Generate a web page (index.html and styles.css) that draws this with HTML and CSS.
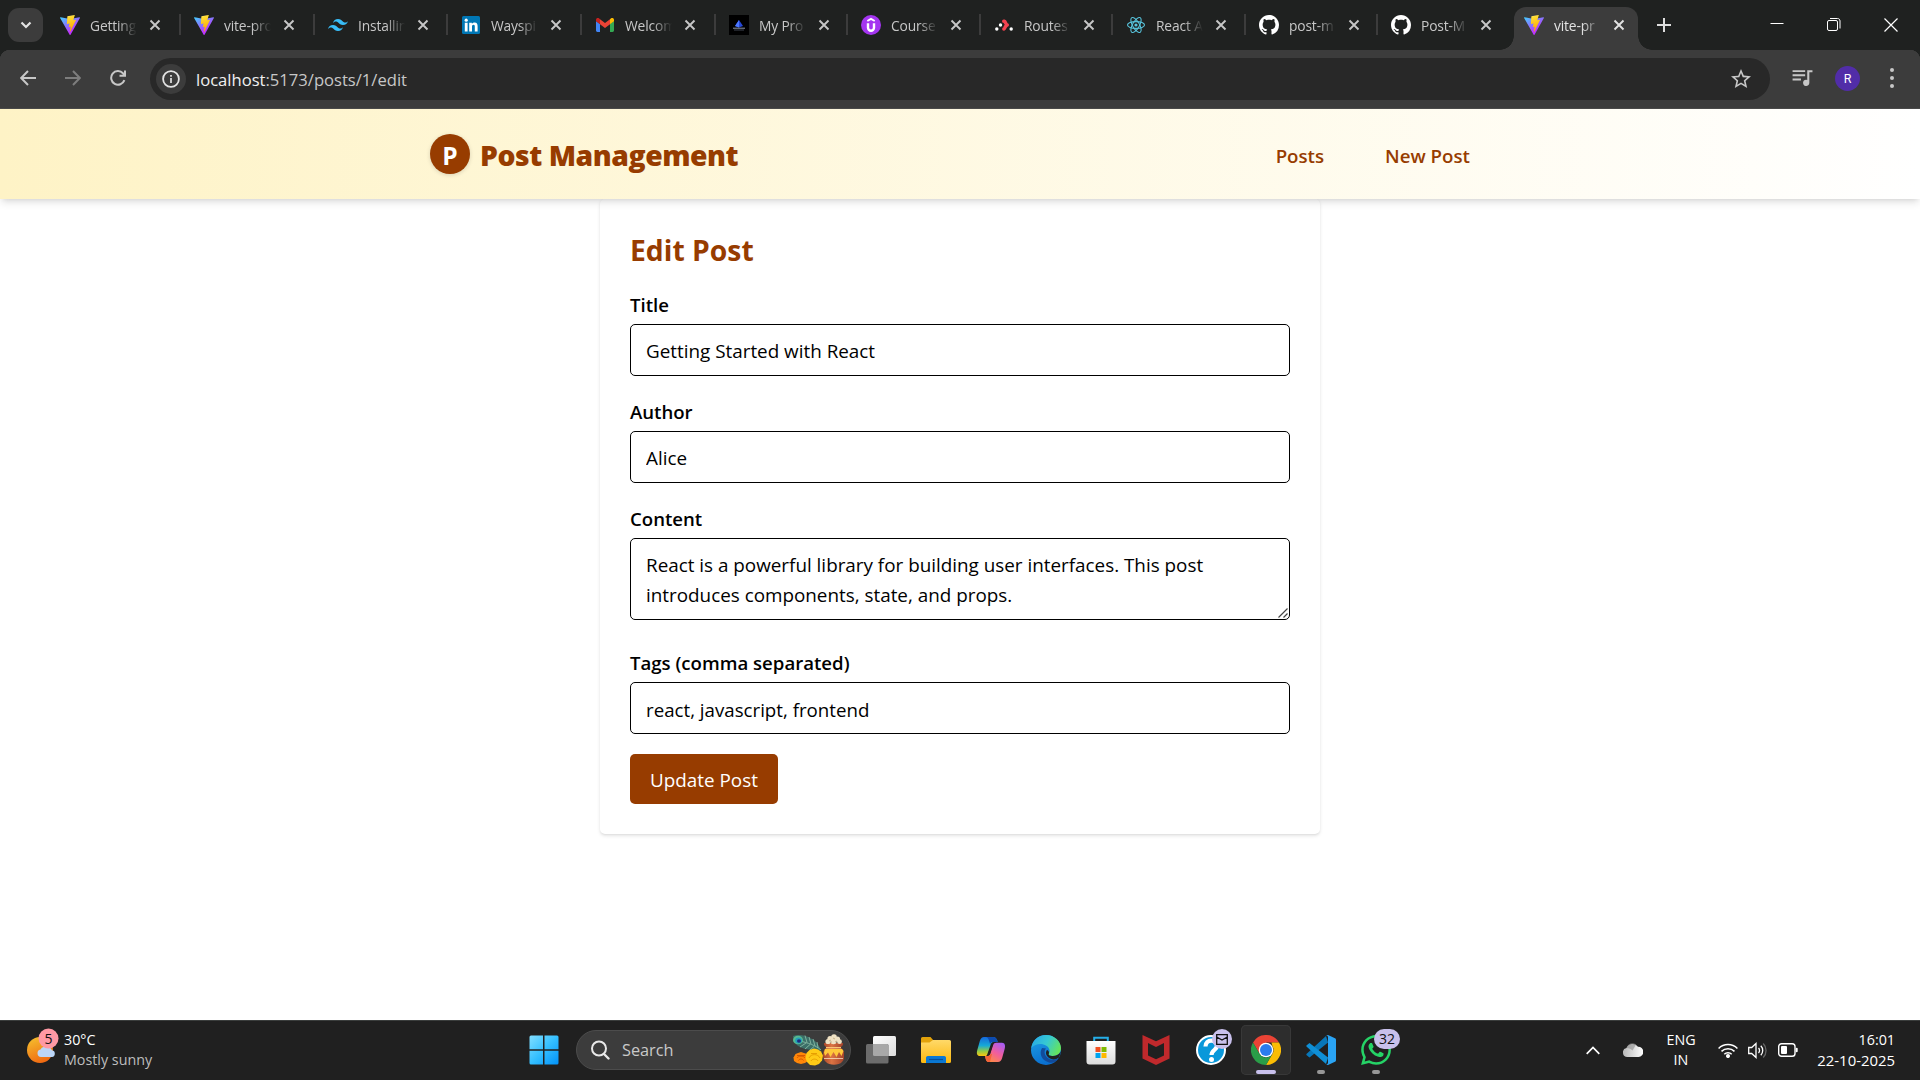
FILE: index.html
```html
<!DOCTYPE html>
<html lang="en">
<head>
<meta charset="utf-8">
<title>vite-project</title>
<link rel="stylesheet" href="styles.css">
</head>
<body>
<svg class="defs" width="0" height="0" aria-hidden="true">
  <defs>
    <linearGradient id="va" x1="0" x2=".55" y1="0" y2=".8"><stop offset="0" stop-color="#41d1ff"/><stop offset="1" stop-color="#bd34fe"/></linearGradient>
    <linearGradient id="vb" x1=".4" x2=".55" y1="0" y2=".9"><stop offset="0" stop-color="#ffea83"/><stop offset=".1" stop-color="#ffdd35"/><stop offset="1" stop-color="#ffa800"/></linearGradient>
    <linearGradient id="win" gradientUnits="userSpaceOnUse" x1="0" x2="30" y1="0" y2="30"><stop offset="0" stop-color="#85e0ff"/><stop offset=".5" stop-color="#34bfff"/><stop offset="1" stop-color="#0090f8"/></linearGradient>
    <linearGradient id="sun" x1=".3" x2=".7" y1="0" y2="1"><stop offset="0" stop-color="#f5bb2c"/><stop offset="1" stop-color="#ef6410"/></linearGradient>
    <linearGradient id="fold" x1="0" x2="0" y1="0" y2="1"><stop offset="0" stop-color="#ffd969"/><stop offset="1" stop-color="#fcb80e"/></linearGradient>
    <linearGradient id="cpa" x1="0" x2="0" y1="0" y2="1"><stop offset="0" stop-color="#1568dd"/><stop offset=".45" stop-color="#16a9d8"/><stop offset=".75" stop-color="#94cb45"/><stop offset="1" stop-color="#ffc50e"/></linearGradient>
    <linearGradient id="cpb" x1=".8" x2=".2" y1="0" y2="1"><stop offset="0" stop-color="#a75cf5"/><stop offset=".5" stop-color="#f15e9c"/><stop offset="1" stop-color="#ff8d3e"/></linearGradient>
    <linearGradient id="ega" x1="0" x2="1" y1=".2" y2=".6"><stop offset="0" stop-color="#27a8e8"/><stop offset=".5" stop-color="#36c9d2"/><stop offset="1" stop-color="#66e45a"/></linearGradient>
    <linearGradient id="egb" x1="0" x2=".4" y1="0" y2="1"><stop offset="0" stop-color="#1fa3e5"/><stop offset="1" stop-color="#0a6fd0"/></linearGradient>
    <linearGradient id="bag" x1="0" x2="0" y1="0" y2="1"><stop offset="0" stop-color="#fff"/><stop offset="1" stop-color="#dcdcdc"/></linearGradient>
    <linearGradient id="cl" x1="0" x2="1" y1="0" y2="0"><stop offset="0" stop-color="#b9b9b9"/><stop offset="1" stop-color="#fff"/></linearGradient>
    <linearGradient id="pot" x1="0" x2="1" y1="0" y2="0"><stop offset="0" stop-color="#a9472a"/><stop offset=".4" stop-color="#dc7443"/><stop offset="1" stop-color="#a3412a"/></linearGradient>
    <symbol id="i-vite" viewBox="0 0 256 257">
      <path fill="url(#va)" d="M255.153 37.938L134.897 252.976c-2.483 4.44-8.862 4.466-11.382.048L.875 37.958c-2.746-4.814 1.371-10.646 6.827-9.67l120.385 21.517a6.537 6.537 0 0 0 2.322-.004l117.867-21.483c5.438-.991 9.574 4.796 6.877 9.62Z"/>
      <path fill="url(#vb)" d="M185.432.063L96.44 17.501a3.268 3.268 0 0 0-2.634 3.014l-5.474 92.456a3.268 3.268 0 0 0 3.997 3.378l24.777-5.718c2.318-.535 4.413 1.507 3.936 3.838l-7.361 36.047c-.495 2.426 1.782 4.5 4.151 3.78l15.304-4.649c2.372-.72 4.652 1.36 4.15 3.788l-11.698 56.621c-.732 3.542 3.979 5.473 5.943 2.437l1.313-2.028l72.516-144.72c1.215-2.423-.88-5.186-3.54-4.672l-25.505 4.922c-2.396.462-4.435-1.77-3.759-4.114l16.646-57.705c.677-2.35-1.37-4.583-3.769-4.113Z"/>
    </symbol>
    <symbol id="i-tailwind" viewBox="2 2 20 20"><path fill="#38bdf8" d="M12 6C9.33 6 7.67 7.33 7 10c1-1.33 2.17-1.83 3.5-1.5.76.19 1.31.74 1.91 1.35.98 1 2.12 2.15 4.59 2.15 2.67 0 4.33-1.33 5-4-1 1.33-2.17 1.83-3.5 1.5-.76-.19-1.3-.74-1.91-1.35C15.61 7.15 14.47 6 12 6m-5 6c-2.67 0-4.33 1.33-5 4 1-1.33 2.17-1.83 3.5-1.5.76.19 1.3.74 1.91 1.35C8.39 16.85 9.53 18 12 18c2.67 0 4.33-1.33 5-4-1 1.33-2.17 1.83-3.5 1.5-.76-.19-1.3-.74-1.91-1.35C10.61 13.15 9.47 12 7 12z"/></symbol>
    <symbol id="i-linkedin" viewBox="0 0 20 20"><rect x="1" y="1" width="18" height="18" rx="1.5" fill="#0077b5"/><circle cx="5.2" cy="5.2" r="1.6" fill="#fff"/><path fill="#fff" d="M3.8 7.8h2.8v8.6H3.8zM8.2 7.8h2.7V9c.5-.8 1.400-1.400 2.700-1.400 2.300 0 3 1.500 3 3.600v5.200h-2.800v-4.700c0-1.100-.2-1.900-1.300-1.900s-1.500.8-1.500 1.900v4.700H8.200z"/></symbol>
    <symbol id="i-gmail" viewBox="0 0 20 20"><path fill="#4285f4" d="M1 6v9.500c0 .8.600 1.400 1.400 1.400H5V9z"/><path fill="#34a853" d="M19 6v9.500c0 .8-.6 1.400-1.400 1.400H15V9z"/><path fill="#ea4335" d="M5 9.300V4.200l5 3.800 5-3.800v5.100l-5 3.800z"/><path fill="#c5221f" d="M1 5c0-2 2-2.500 3.200-1.500l.8.700v5.100L1 6.300z"/><path fill="#fbbc04" d="M19 5c0-2-2-2.500-3.200-1.500l-.8.700v5.100l4-3z"/></symbol>
    <symbol id="i-gem" viewBox="0 0 20 20"><path fill="#000" d="M0 0h20v20H0z"/><path fill="#2447d8" d="M10 5l4 6-4 1.500L6 11z"/><path fill="#4c78ff" d="M10 5v7.500L6 11z"/><path stroke="#8b95a8" stroke-width="1" d="M4 13.200h12"/><path stroke="#3f4550" d="M5 15h10"/></symbol>
    <symbol id="i-udemy" viewBox="0 0 20 20"><circle cx="10" cy="10" r="10" fill="#a435f0"/><path fill="none" stroke="#fff" stroke-width="2.400" d="M7 8.300V12.800a3 3 0 0 0 6 0V8.300"/><path fill="none" stroke="#fff" stroke-width="1.800" d="M6.300 6 10 3.900l3.700 2.100"/></symbol>
    <symbol id="i-router" viewBox="0 0 20 20"><g fill="#fff"><circle cx="6.500" cy="10" r="1.700"/><circle cx="2.800" cy="14" r="1.700"/><circle cx="17.200" cy="14" r="1.700"/></g><path stroke="#f44250" stroke-width="3.400" stroke-linecap="round" stroke-linejoin="round" fill="none" d="M9.700 6.300h.6c1.500.2 1 3.200 3 3.700-2.500.5-2 3.700-3.400 4h-.1"/></symbol>
    <symbol id="i-react" viewBox="-10 -10 20 20"><circle r="1.600" fill="#58c4dc"/><g fill="none" stroke="#58c4dc" stroke-width="1.100"><ellipse rx="8.500" ry="3.400"/><ellipse rx="8.500" ry="3.400" transform="rotate(60)"/><ellipse rx="8.500" ry="3.400" transform="rotate(120)"/></g></symbol>
    <symbol id="i-github" viewBox="0 0 16 16"><path fill="#fff" d="M8 0C3.580 0 0 3.580 0 8c0 3.540 2.290 6.530 5.470 7.590.4.070.55-.17.55-.38 0-.19-.01-.82-.01-1.490-2.010.37-2.530-.49-2.690-.94-.09-.23-.48-.94-.82-1.130-.28-.15-.68-.52-.01-.53.63-.01 1.080.58 1.230.82.72 1.210 1.870.87 2.330.66.070-.52.28-.87.51-1.070-1.780-.2-3.640-.89-3.640-3.950 0-.87.31-1.590.82-2.150-.08-.2-.36-1.020.08-2.120 0 0 .67-.21 2.200.82.64-.18 1.320-.27 2-.27s1.360.09 2 .27c1.530-1.040 2.200-.82 2.200-.82.44 1.100.16 1.920.08 2.120.51.56.82 1.270.82 2.150 0 3.070-1.870 3.750-3.650 3.950.29.25.54.73.54 1.480 0 1.070-.01 1.930-.01 2.200 0 .21.15.46.55.38A8.010 8.010 0 0 0 16 8c0-4.420-3.580-8-8-8z"/></symbol>
    <symbol id="i-x" viewBox="0 0 12 12"><path stroke="currentColor" stroke-width="1.900" d="M1.500 1.500l9 9m0-9l-9 9"/></symbol>
  </defs>
</svg>

<div class="tabstrip">
  <div class="tabsearch"><svg width="14" height="14" viewBox="0 0 14 14"><path fill="none" stroke="#e3e3e3" stroke-width="2.200" d="M2.500 4.500L7 9l4.500-4.500"/></svg></div>
  <div class="tabs">
    <div class="tab"><svg class="fav"><use href="#i-vite"/></svg><span>Getting</span><svg class="x"><use href="#i-x"/></svg></div>
    <div class="tab"><svg class="fav"><use href="#i-vite"/></svg><span>vite-pro</span><svg class="x"><use href="#i-x"/></svg></div>
    <div class="tab"><svg class="fav"><use href="#i-tailwind"/></svg><span>Installin</span><svg class="x"><use href="#i-x"/></svg></div>
    <div class="tab"><svg class="fav"><use href="#i-linkedin"/></svg><span>Wayspi</span><svg class="x"><use href="#i-x"/></svg></div>
    <div class="tab"><svg class="fav"><use href="#i-gmail"/></svg><span>Welcom</span><svg class="x"><use href="#i-x"/></svg></div>
    <div class="tab"><svg class="fav"><use href="#i-gem"/></svg><span>My Pro</span><svg class="x"><use href="#i-x"/></svg></div>
    <div class="tab"><svg class="fav"><use href="#i-udemy"/></svg><span>Course</span><svg class="x"><use href="#i-x"/></svg></div>
    <div class="tab"><svg class="fav"><use href="#i-router"/></svg><span>Routes</span><svg class="x"><use href="#i-x"/></svg></div>
    <div class="tab"><svg class="fav"><use href="#i-react"/></svg><span>React A</span><svg class="x"><use href="#i-x"/></svg></div>
    <div class="tab"><svg class="fav"><use href="#i-github"/></svg><span>post-m</span><svg class="x"><use href="#i-x"/></svg></div>
    <div class="tab last"><svg class="fav"><use href="#i-github"/></svg><span>Post-M</span><svg class="x"><use href="#i-x"/></svg></div>
    <div class="tab active"><svg class="fav"><use href="#i-vite"/></svg><span>vite-pr</span><svg class="x"><use href="#i-x"/></svg></div>
  </div>
  <svg class="plus" width="14" height="14" viewBox="0 0 14 14"><path stroke="#dedede" stroke-width="2" d="M7 0v14M0 7h14"/></svg>
  <div class="winbtns">
    <svg width="14" height="14" viewBox="0 0 14 14"><path stroke="#fff" d="M.5 5.500h13"/></svg>
    <svg width="14" height="14" viewBox="0 0 14 14" fill="none" stroke="#fff"><rect x=".5" y="2.500" width="10" height="10" rx="1.500"/><path d="M3 .5h7.500c1.500 0 2.500 1 2.500 2.500v7.500"/></svg>
    <svg width="14" height="14" viewBox="0 0 14 14"><path stroke="#fff" stroke-width="1.200" d="M.5.500l13 13m0-13l-13 13"/></svg>
  </div>
</div>

<div class="toolbar">
  <div class="navbtns">
    <svg width="16" height="16" viewBox="0 0 16 16" fill="none" stroke="#c7c7c7" stroke-width="2"><path d="M16 8H1.500M8 1L1.200 8 8 15"/></svg>
    <svg width="16" height="16" viewBox="0 0 16 16" fill="none" stroke="#7d7d7d" stroke-width="2"><path d="M0 8h14.500M8 1l6.800 7L8 15"/></svg>
    <svg width="16" height="16" viewBox="0 0 16 16" fill="none" stroke="#c7c7c7" stroke-width="2"><path d="M14.400 10.200A6.800 6.800 0 1 1 13 3.300L15 5.600M15 .5v5.300H9.500"/></svg>
  </div>
  <div class="omnibox">
    <div class="info"><svg width="18" height="18" viewBox="0 0 18 18"><circle cx="9" cy="9" r="7.900" fill="none" stroke="#e3e3e3" stroke-width="1.800"/><path stroke="#e3e3e3" stroke-width="1.700" d="M9 8v5M9 5v1.800"/></svg></div>
    <div class="url"><b>localhost</b>:5173/posts/1/edit</div>
    <svg class="star" width="20" height="20" viewBox="2 2 20 20"><path fill="#c7c7c7" d="M22 9.240l-7.190-.62L12 2 9.190 8.630 2 9.240l5.460 4.730L5.820 21 12 17.270 18.180 21l-1.630-7.030L22 9.240zM12 15.400l-3.760 2.270 1-4.280-3.320-2.880 4.380-.38L12 6.100l1.710 4.040 4.380.38-3.320 2.880 1 4.280L12 15.400z"/></svg>
  </div>
  <svg class="queue" width="22" height="22" viewBox="1.500 1.500 21 21"><path fill="#c7c7c7" d="M15 4.500H3v1.800h12zm0 4H3v1.800h12zM3 14.300h8v-1.800H3zM17 4.500v9.300a3 3 0 1 0 2 2.900V6.500h3v-2z"/></svg>
  <div class="avatar">R</div>
  <svg class="dots" width="6" height="22" viewBox="0 0 6 22" fill="#c7c7c7"><circle cx="3" cy="3" r="2"/><circle cx="3" cy="11" r="2"/><circle cx="3" cy="19" r="2"/></svg>
</div>

<header class="site">
  <div class="wrap">
    <div class="logo">P</div>
    <div class="brand">Post Management</div>
    <nav><a>Posts</a><a class="new">New Post</a></nav>
  </div>
</header>
<main>
  <form class="card">
    <h2>Edit Post</h2>
    <div class="field"><label>Title</label><input type="text" value="Getting Started with React"></div>
    <div class="field"><label>Author</label><input type="text" value="Alice"></div>
    <div class="field content"><label>Content</label><textarea rows="2">React is a powerful library for building user interfaces. This post
introduces components, state, and props.</textarea><svg class="grip" width="10" height="10" viewBox="0 0 10 10"><path stroke="#444" stroke-width="1.200" d="M.5 9.500l9-9M5.500 9.500l4-4"/></svg></div>
    <div class="field tags"><label>Tags (comma separated)</label><input type="text" value="react, javascript, frontend"></div>
    <button type="button">Update Post</button>
  </form>
</main>

<footer class="taskbar">
  <div class="weather">
    <svg width="38" height="38" viewBox="0 0 38 38"><circle cx="15" cy="22" r="13" fill="url(#sun)"/><path fill="#bcd6f7" d="M16 29a3.800 3.800 0 0 1-.5-7.500 4.500 4.500 0 0 1 7-1.500 4 4 0 0 1 4.500 2.300 3.400 3.400 0 0 1 0 6.700z"/><circle cx="23.500" cy="10.500" r="10" fill="#ff99a4"/><text x="23.500" y="15.500" class="badgetext" text-anchor="middle">5</text></svg>
    <div class="lines"><span>30°C</span><span class="dim sunny">Mostly sunny</span></div>
  </div>
  <div class="start"><svg width="30" height="30" viewBox="0 0 30 30"><path fill="url(#win)" d="M2 .5h12v13.800H.500V2A1.500 1.500 0 0 1 2 .5zM15.500.5H28A1.500 1.500 0 0 1 29.500 2v12.300h-14zM.5 15.700H14v13.800H2A1.500 1.500 0 0 1 .5 28zM15.500 15.700h14V28a1.500 1.500 0 0 1-1.500 1.500H15.500z"/></svg></div>
  <div class="search">
    <svg width="19" height="20" viewBox="0 0 19 20" fill="none" stroke="#e8e8e8"><circle cx="8" cy="8.500" r="7" stroke-width="2"/><path stroke-width="2.400" stroke-linecap="round" d="M13 14l4.500 4.500"/></svg>
    <span>Search</span>
    <svg class="deco" width="52" height="32" viewBox="0 0 52 32">
      <path fill="#3c6f68" d="M1 2c5-2 13-1 19 3 4 2 7 6 9 11-9 1-21-1-25-6C2 7 1 5 1 2z"/>
      <path fill="none" stroke="#86b9a4" stroke-width=".9" d="M8 7c8 2 15 4 21 9M13 1.500l2 7M17 3l2 7M21 5l2 7M25 8l1 6M8 13l6-4M13 15l5-4.500M18 16l4-3.500"/>
      <ellipse cx="6" cy="6" rx="5" ry="4.300" fill="#58b98f"/><ellipse cx="6.500" cy="6.500" rx="3.400" ry="3" fill="#22a0b8"/><ellipse cx="7" cy="7" rx="2" ry="1.700" fill="#1f2b7f"/>
      <path fill="url(#pot)" d="M34 14c-4 3-4 11 0 14 3 3.500 13 3.500 16 0 3.500-3 3.500-11-1-14z"/>
      <path fill="#fff0d0" opacity=".7" d="M32 24h19v1H32z"/><path fill="#ffc83a" d="M33 15h17l1.500 2-2 5-2.500-4-2.500 5-3-5-3 5-2.500-4.500-3 3.500-1-3.500z"/>
      <path fill="url(#pot)" d="M32 9h19v2l-3 3H35l-3-3z"/><path fill="#f8c579" d="M34 13h15v1.300H34z"/>
      <g fill="#f0e2c4"><circle cx="36" cy="7.500" r="2.600"/><circle cx="38" cy="4.500" r="2.600"/><circle cx="42" cy="3" r="2.800"/><circle cx="45.500" cy="5" r="2.600"/><circle cx="47.500" cy="7.700" r="2.400"/><circle cx="41.500" cy="7" r="3.200"/></g><path fill="none" stroke="#bfa678" stroke-width=".8" d="M37 7l2-1m2-2l2 1m0 3l2-1m-6 1h1"/>
      <path fill="#ff8708" d="M9 18l3 1 3 1 2 3-1 4-3 2-4 1-4-1-3-2-.5-3.500L3.500 20 6 19z"/><path fill="none" stroke="#cf5500" stroke-width=".9" d="M5 24c1-2.500 7-2.500 8 0M6.500 26.500c1-2 4-2 5 0M5 21.500h8"/>
      <path fill="#ffcb16" d="M22 14.500l4 1 3 2 2 4-1 5-3 3.500-4 1.500-5-.5-3-3-1.500-4 1-5 3-3z"/><path fill="none" stroke="#e39a00" stroke-width=".9" d="M17 24c2-4.500 9-4.500 11 0M19 27c1-2.500 6-2.500 7 0M19 19.500h6"/>
    </svg>
  </div>
  <div class="apps">
    <div class="app"><svg width="30" height="30" viewBox="0 0 30 30"><defs><linearGradient id="tv" x1="0" x2="1" y1="0" y2="1"><stop stop-color="#fff"/><stop offset="1" stop-color="#dcdcdc"/></linearGradient></defs><rect x="7" y="1" width="23" height="20" rx="1.500" fill="url(#tv)"/><rect x="0" y="9" width="22.500" height="19.500" rx="1.500" fill="#6c6c6c"/><path fill="#a8a8a8" d="M7 9h14a1.500 1.500 0 0 1 1.500 1.500V21H8.500A1.500 1.500 0 0 1 7 19.500z"/></svg></div>
    <div class="app"><svg width="30" height="30" viewBox="0 0 30 30"><path fill="#e2a20b" d="M0 3.500A1.500 1.500 0 0 1 1.500 2h8l3 3.500-3 5H0z"/><path fill="url(#fold)" d="M0 7.500h8.500L12 5h16.500A1.500 1.500 0 0 1 30 6.500v20a1.500 1.500 0 0 1-1.500 1.500h-27A1.500 1.500 0 0 1 0 26.500z"/><path fill="#0a78d4" d="M5 28v-5.500A1.800 1.800 0 0 1 6.800 21h16.400a1.800 1.800 0 0 1 1.800 1.500V28z"/><path stroke="#064f9b" stroke-width="1.200" d="M8 24.500h14"/></svg></div>
    <div class="app"><svg width="30" height="30" viewBox="0 0 30 30"><path fill="url(#cpa)" d="M8 2h9c3 0 4 2 4.700 5h-4c-2 0-2.700 1-3.500 4l-3 8.500c-.5 1-1 1.500-2.200 1.500H4c-3 0-3.700-2.500-2.700-6l2.500-9C4.700 3.300 6 2 8 2z"/><path fill="#0d4bae" d="M17 2c3 0 4 2 4.700 5h-5c-1.300 0-2 .5-2.600 2C13 5 12 2 10 2z"/><path fill="url(#cpb)" d="M22 27h-9c-2.500 0-3-1.500-4-6h2.500c2 0 2.500-1 3.200-3.500l2.500-7.500c.6-1.600 1.500-2.300 3-2.300H26c3 0 3.500 3 2.700 6l-2.500 9c-.9 3-2.200 4.300-4.200 4.300z"/><path fill="#f4633a" d="M13 27c-2.500 0-3-1.500-4-6h3c1.300 0 2-.5 2.700-2l1.300 0-2 8z"/><path fill="#222" d="M14.500 12l2.300-2.500L14 19h-2z"/></svg></div>
    <div class="app"><svg width="30" height="30" viewBox="0 0 30 30"><circle cx="15" cy="15" r="15" fill="url(#egb)"/><path fill="#124b9b" d="M11 13c-3 5-1 12 7 14.500 4 1 7.500-.8 9.500-4-6 3.500-12 0-13.500-4-1-3 0-5 1-6z"/><path fill="url(#ega)" d="M.3 13C1.500 5 7.500 0 15 0c8.500 0 15 6.500 15 13 0 5-3.500 8-8 8-3 0-5-1-4.200-2.300 1.500-2 1-6-2.500-8C11 8 4 8.500.3 13z"/><path fill="#222" d="M28 22.500c-4 3-8 2-10.500 0-3-2.500-3-5.500-1.500-7.500 1.500.5 2.500 2.200 1.800 3.700C17 20 19 21 22 21c3 0 5.500-1 8-4.500z"/></svg></div>
    <div class="app"><svg width="30" height="30" viewBox="0 0 30 30"><path fill="none" stroke="#25aee8" stroke-width="2" d="M8.200 7V2.700h13.600V7"/><path fill="url(#bag)" d="M.5 6h29v20.500A3 3 0 0 1 26.500 29.500h-23A3 3 0 0 1 .5 26.500z"/><path fill="#f25022" d="M9.500 12h5v5h-5z"/><path fill="#7fba00" d="M15.500 12h5v5h-5z"/><path fill="#00a4ef" d="M9.500 18h5v5h-5z"/><path fill="#ffb900" d="M15.500 18h5v5h-5z"/></svg></div>
    <div class="app"><svg width="30" height="30" viewBox="0 0 30 30"><path fill="#c0292c" d="M1.500 0L15 6.300 28.500 0v23.500L15 30 1.500 23.500zM7 8v12.500l8 3.700 8-3.700V8l-8 4z"/></svg></div>
    <div class="app"><svg width="30" height="30" viewBox="0 0 30 30"><circle cx="15" cy="15" r="14" fill="#0998da" stroke="#fff" stroke-width="2"/><path fill="none" stroke="#fff" stroke-width="4.200" d="M9.500 11.500c0-8 11.500-7.500 11.500-1 0 4.500-5.500 4.500-5.500 9.500"/><circle cx="15.500" cy="24.500" r="2.500" fill="#fff"/></svg><i class="badge mail"><svg width="12" height="11" viewBox="0 0 12 11"><path fill="none" stroke="#111" stroke-width="1.300" d="M.7.700h10.600v9.600H.7zM.7 3L6 6l5.300-3"/></svg></i></div>
    <div class="app current"><svg width="30" height="30" viewBox="0 0 30 30"><path fill="#ea4335" d="M2 7.500a15 15 0 0 1 26 0H15l-6.500 11.300z"/><path fill="#fbbc04" d="M28 7.500A15 15 0 0 1 15 30l6.500-11.300A7.500 7.500 0 0 0 21.400 11l-1-3.500z"/><path fill="#2a9d48" d="M2 7.500A15 15 0 0 0 15 30l6.500-11.300a7.500 7.500 0 0 1-13 0z"/><circle cx="15" cy="15" r="7.300" fill="#fff"/><circle cx="15" cy="15" r="6" fill="#2b7bee"/></svg></div>
    <div class="app run"><svg width="30" height="30" viewBox="0 0 30 30"><path fill="#0877b9" d="M22 7.500L3.500 22.500.7 20.200c-.5-.4-.5-1.100 0-1.500L20 1z"/><path fill="#0f8fd6" d="M22 22.500L3.500 8 .7 10.200c-.5.400-.5 1 0 1.500L20 29z"/><path fill="#2aa4f4" d="M22 0l7 3.200c.6.300 1 .8 1 1.500v20.600c0 .7-.4 1.200-1 1.500L22 30c-.8 0-1.500-.3-2-1 1 .6 2 0 2-1.200V2.200C22 1 21 .4 20 1c.5-.7 1.200-1 2-1z"/></svg></div>
    <div class="app run"><svg width="30" height="30" viewBox="0 0 24 24"><path fill="#25d366" d="M17.472 14.382c-.297-.149-1.758-.867-2.030-.967-.273-.099-.471-.148-.67.15-.197.297-.767.966-.94 1.164-.173.199-.347.223-.644.075-.297-.15-1.255-.463-2.390-1.475-.883-.788-1.480-1.761-1.653-2.059-.173-.297-.018-.458.13-.606.134-.133.298-.347.446-.52.149-.174.198-.298.298-.497.099-.198.05-.371-.025-.52-.075-.149-.669-1.612-.916-2.207-.242-.579-.487-.5-.669-.51-.173-.008-.371-.01-.57-.01-.198 0-.52.074-.792.372-.272.297-1.040 1.016-1.040 2.479 0 1.462 1.065 2.875 1.213 3.074.149.198 2.096 3.200 5.077 4.487.709.306 1.262.489 1.694.625.712.227 1.360.195 1.871.118.571-.085 1.758-.719 2.006-1.413.248-.694.248-1.289.173-1.413-.074-.124-.272-.198-.57-.347m-5.421 7.403h-.004a9.870 9.870 0 01-5.031-1.378l-.361-.214-3.741.982.998-3.648-.235-.374a9.860 9.860 0 01-1.510-5.260c.001-5.450 4.436-9.884 9.888-9.884 2.640 0 5.122 1.030 6.988 2.898a9.825 9.825 0 012.893 6.994c-.003 5.450-4.437 9.884-9.885 9.884m8.413-18.297A11.815 11.815 0 0012.050 0C5.495 0 .16 5.335.157 11.892c0 2.096.547 4.142 1.588 5.945L.057 24l6.305-1.654a11.882 11.882 0 005.683 1.448h.005c6.554 0 11.890-5.335 11.893-11.893a11.821 11.821 0 00-3.480-8.413Z"/></svg><i class="badge count">32</i></div>
  </div>
  <div class="tray">
    <svg width="14" height="9" viewBox="0 0 14 9"><path fill="none" stroke="#fff" stroke-width="1.700" d="M.7 7.800L7 1.500l6.300 6.300"/></svg>
    <svg class="cloud" width="20" height="14" viewBox="0 0 20 14"><path fill="url(#cl)" d="M4.500 14a4.500 4.500 0 0 1-1-8.900A6.500 6.500 0 0 1 15 3.800 5.100 5.100 0 0 1 15.500 14z"/><path fill="#8d8d8d" opacity=".6" d="M3.500 5.100C6 5 8 6 9.500 7.500L13 1.800C10-.8 5 0 3.500 5.100z"/></svg>
    <div class="lang"><span>ENG</span><span>IN</span></div>
    <svg class="wifi" width="20" height="15" viewBox="0 0 20 15" fill="none" stroke="#fff" stroke-width="1.500"><path d="M.6 5.500a13.300 13.300 0 0 1 18.800 0M3.500 8.400a9.200 9.200 0 0 1 13 0M6.300 11.200a5.200 5.200 0 0 1 7.400 0"/><circle cx="10" cy="13" r="1.300" fill="#fff"/></svg>
    <svg class="vol" width="20" height="17" viewBox="0 0 20 17" fill="none" stroke="#fff" stroke-width="1.300"><path d="M.7 5.500h3L8 1.500v14l-4.300-4h-3zM10.500 6a3.500 3.500 0 0 1 0 5M12.800 3.800a6.700 6.700 0 0 1 0 9.400"/><path stroke="#666" d="M15.200 1.500a10 10 0 0 1 0 14"/></svg>
    <svg width="20" height="14" viewBox="0 0 20 14"><rect x=".7" y=".7" width="16.300" height="12.600" rx="2.800" fill="none" stroke="#fff" stroke-width="1.400"/><rect x="3" y="3" width="6" height="8" rx="1" fill="#fff"/><path stroke="#fff" stroke-width="2" stroke-linecap="round" d="M18.700 5.700v2.600"/></svg>
    <div class="clock"><span>16:01</span><span class="date">22-10-2025</span></div>
  </div>
</footer>
</body>
</html>
```
FILE: styles.css
```css
* { box-sizing: border-box; }
body {
  margin: 0;
  width: 1920px;
  height: 1080px;
  overflow: hidden;
  display: flex;
  flex-direction: column;
  background: #fff;
  color: #000;
  font-family: "Open Sans", "Noto Sans", sans-serif;
}
.defs { position: absolute; }
svg { display: block; flex: none; }

/* Browser tabs */
.tabstrip {
  height: 50px;
  flex: none;
  display: flex;
  align-items: center;
  background: #1f2120;
  padding-left: 8px;
}
.tabsearch {
  width: 35px;
  height: 34px;
  border-radius: 11px;
  background: #3c3c3c;
  display: grid;
  place-items: center;
}
.tabs {
  align-self: stretch;
  margin-left: 4px;
  display: grid;
  grid-template-columns: 134px 134px 133px 134px 134px 132px 133px 132px 133px 132px 132px 131px;
}
.tab {
  display: flex;
  align-items: center;
  position: relative;
  padding-left: 13px;
  color: #c7c7c7;
  font-size: 13.800px;
}
.tab::after {
  content: "";
  position: absolute;
  right: 0;
  top: 14px;
  width: 2px;
  height: 21px;
  background: #3c3c3c;
}
.tab.last::after { display: none; }
.tab span {
  width: 52px;
  margin: 1px 0 0 10px;
  white-space: nowrap;
  letter-spacing: -.15px;
  -webkit-mask-image: linear-gradient(90deg, #000 28px, transparent 47px);
  mask-image: linear-gradient(90deg, #000 28px, transparent 47px);
}
.fav { width: 20px; height: 20px; }
.x { width: 12px; height: 12px; margin-left: 7px; }
.tab.active {
  margin: 7px 3px 0 4px;
  padding: 0 0 7px 10px;
  background: #3c3c3c;
  border-radius: 12px 12px 0 0;
  color: #e3e3e3;
}
.tab.active::before, .tab.active::after {
  content: "";
  position: absolute;
  top: auto;
  bottom: 0;
  width: 14px;
  height: 14px;
}
.tab.active::before { left: -14px; background: radial-gradient(circle at 0 0, transparent 13.500px, #3c3c3c 14px); }
.tab.active::after { right: -14px; background: radial-gradient(circle at 100% 0, transparent 13.500px, #3c3c3c 14px); }
.plus { margin-left: 16px; }
.winbtns { margin-left: auto; margin-right: 22px; display: flex; gap: 43px; }

/* Address row */
.toolbar {
  height: 59px;
  flex: none;
  display: flex;
  align-items: center;
  padding: 0 25px 2px 20px;
  background:
    radial-gradient(circle at 10px 10px, #3c3c3c 10px, #1f2120 10.500px) 0 0 / 10px 10px no-repeat,
    radial-gradient(circle at 0 10px, #3c3c3c 10px, #1f2120 10.500px) 100% 0 / 10px 10px no-repeat,
    #3c3c3c;
  border-bottom: 1px solid #4a4a4a;
}
.navbtns { display: flex; gap: 29px; }
.omnibox {
  width: 1620px;
  height: 42px;
  margin: 2px 0 0 24px;
  padding: 0 19px 0 6px;
  border-radius: 21px;
  background: #282828;
  display: flex;
  align-items: center;
}
.info {
  width: 30px;
  height: 30px;
  border-radius: 50%;
  background: #3c3c3c;
  display: grid;
  place-items: center;
}
.url { flex: 1; margin: 0 0 0 10px; font-size: 16.600px; color: #c7c7c7; }
.url b { font-weight: 400; color: #f0f0f0; }
.queue { margin-left: 21px; }
.avatar {
  width: 25px;
  height: 25px;
  margin-left: 22px;
  border-radius: 50%;
  background: #512da8;
  color: #fff;
  font: 12.500px/25px Roboto, sans-serif;
  text-align: center;
}
.dots { margin-left: auto; }

/* Page header */
.site {
  height: 90px;
  flex: none;
  position: relative;
  z-index: 1;
  background: linear-gradient(90deg, #fef3c6, #fff);
  box-shadow: 0 5px 7.500px -1px rgba(0,0,0,.1), 0 2.500px 5px -2.500px rgba(0,0,0,.1);
}
.wrap {
  width: 1060px;
  height: 100%;
  margin: 0 auto;
  display: flex;
  align-items: center;
  color: #973c00;
}
.logo {
  width: 40px;
  height: 40px;
  border-radius: 50%;
  background: #973c00;
  color: #fff;
  font-size: 24.500px;
  font-weight: 700;
  line-height: 43px;
  text-align: center;
  box-shadow: 0 1px 4px rgba(0,0,0,.15);
}
.brand { margin: 2px 0 0 10px; font-size: 28.300px; font-weight: 800; letter-spacing: -.45px; }
nav { margin: 2px 20px 0 auto; display: flex; gap: 61px; font-size: 18.700px; font-weight: 600; }

/* Form */
main { flex: 1; }
.card {
  width: 720px;
  height: 635px;
  margin: 0 auto;
  padding: 30px;
  border-radius: 5px;
  box-shadow: 0 1.250px 3.750px rgba(0,0,0,.1), 0 1.250px 2.500px -1.250px rgba(0,0,0,.1);
}
h2 { margin: 0 0 20px; font-size: 28.300px; line-height: 43px; height: 40px; font-weight: 700; color: #973c00; }
.field { position: relative; display: flex; flex-direction: column; gap: 5px; margin-bottom: 20px; }
.field.content { margin-bottom: 27px; }
label { font-size: 18.600px; line-height: 31px; height: 30px; font-weight: 600; }
input, textarea {
  width: 100%;
  height: 52px;
  padding: 11px 15px 9px;
  border: 1px solid #000;
  border-radius: 5px;
  background: #fff;
  color: #000;
  font-family: inherit;
  font-size: 18.850px;
  line-height: 30px;
  outline: 0;
}
textarea { height: 82px; overflow: hidden; white-space: pre; resize: none; }
.grip { position: absolute; right: 2px; bottom: 2px; }
.tags input { font-size: 18.700px; }
button {
  width: 148px;
  height: 50px;
  padding: 2px 0 0;
  border: 0;
  border-radius: 5px;
  background: #973c00;
  color: #fff;
  font-family: inherit;
  font-size: 18.850px;
}

/* Taskbar */
.taskbar {
  height: 60px;
  flex: none;
  display: flex;
  align-items: center;
  background: #202020;
  box-shadow: inset 0 1px #3a3d3c;
  color: #fff;
  font-size: 14.300px;
}
.lines, .lang, .clock { display: flex; flex-direction: column; line-height: 20px; white-space: nowrap; }
.lines, .clock { margin-top: -1px; }
.weather { width: 529px; padding-left: 25px; display: flex; align-items: center; gap: 1px; }
.weather > svg { margin-top: -7px; }
.badgetext { font-size: 14px; fill: #111; }
.dim { color: #bdbdbd; }
.search {
  width: 275px;
  height: 40px;
  margin-left: 17px;
  padding: 0 6px 0 14px;
  border: 1px solid #4c4c4c;
  border-radius: 20px;
  background: #3c3c3c;
  display: flex;
  align-items: center;
  color: #c9c9c9;
  font-size: 16.300px;
}
.search span { margin-left: 12px; }
.deco { margin-left: auto; }
.apps { margin-left: 5px; display: flex; gap: 5px; }
.app { position: relative; width: 50px; height: 50px; display: grid; place-items: center; }
.current { border-radius: 5px; background: #2d2d2d; box-shadow: inset 0 0 0 1px #383838; }
.current::after, .run::after {
  content: "";
  position: absolute;
  left: 15px;
  bottom: 1px;
  width: 20px;
  height: 4px;
  border-radius: 2px;
  background: #c8c0ec;
}
.run::after { left: 21px; width: 8px; background: #979797; }
.badge {
  position: absolute;
  left: 26px;
  top: 4px;
  height: 20px;
  border-radius: 10px;
  background: #c8c0ec;
  color: #111;
  font-style: normal;
  font-size: 14px;
  line-height: 20px;
  display: grid;
  place-items: center;
}
.mail { width: 20px; }
.count { left: 23px; width: 26px; }
.tray { margin-left: auto; padding-right: 25px; display: flex; align-items: center; }
.cloud { margin-left: 23px; }
.lang { width: 40px; margin-left: 18px; align-items: center; }
.wifi { margin-left: 17px; }
.vol { margin: 0 10px; }
.clock { width: 97px; align-items: flex-end; }
.date { font-size: 14.900px; }
```
